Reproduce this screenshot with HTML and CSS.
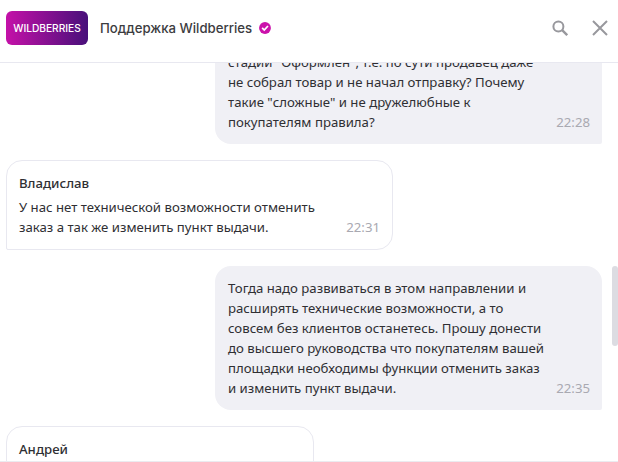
FILE: index.html
```html
<!DOCTYPE html>
<html lang="ru">
<head>
    <meta charset="UTF-8">
    <title>Поддержка Wildberries</title>
    <link rel="stylesheet" href="styles.css">
</head>
<body>
    <div class="chat">
        <header class="chat-header">
            <div class="logo">WILDBERRIES</div>
            <div class="chat-title">Поддержка Wildberries</div>
            <svg class="verified" width="12" height="12" viewBox="0 0 13 13">
                <circle cx="6.5" cy="6.5" r="6.4" fill="#cb11ab"/>
                <path d="M3.4 6.4l2.3 2.3 4-4.4" fill="none" stroke="#fff" stroke-width="1.9"/>
            </svg>
            <div class="header-actions">
                <svg width="16" height="16" viewBox="0 0 16 16">
                    <circle cx="6.4" cy="6.4" r="5" fill="none" stroke="#98989d" stroke-width="2"/>
                    <path d="M9.9 9.9l5.3 5.3" stroke="#98989d" stroke-width="2.4"/>
                </svg>
                <svg width="16" height="16" viewBox="0 0 16 16">
                    <path d="M1 1l14 14M15 1L1 15" stroke="#98989d" stroke-width="2"/>
                </svg>
            </div>
        </header>

        <div class="messages">
            <div class="message message-own message-first">
                <p>стадии "Оформлен", т.е. по сути продавец даже<br>не собрал товар и не начал отправку? Почему<br>такие "сложные" и не дружелюбные к<br>покупателям правила?</p>
                <span class="time">22:28</span>
            </div>
            <div class="message message-other">
                <div class="author">Владислав</div>
                <p>У нас нет технической возможности отменить<br>заказ а так же изменить пункт выдачи.</p>
                <span class="time">22:31</span>
            </div>
            <div class="message message-own">
                <p>Тогда надо развиваться в этом направлении и<br>расширять технические возможности, а то<br>совсем без клиентов останетесь. Прошу донести<br>до высшего руководства что покупателям вашей<br>площадки необходимы функции отменить заказ<br>и изменить пункт выдачи.</p>
                <span class="time">22:35</span>
            </div>
            <div class="message message-other message-last">
                <div class="author">Андрей</div>
            </div>
            <div class="scrollbar"></div>
        </div>
    </div>
</body>
</html>
```

FILE: styles.css
```css
* {
    box-sizing: border-box;
}
html, body {
    margin: 0;
    height: 100%;
}
body {
    font-family: "Noto Sans", sans-serif;
    font-size: 13.2px;
    line-height: 20px;
    color: #2f2f33;
    background-color: #fff;
    overflow: hidden;
}
.chat {
    display: flex;
    flex-direction: column;
    height: 462px;
    border-bottom: 1px solid #ebebf0;
}
.chat-header {
    display: flex;
    align-items: center;
    flex: none;
    height: 63px;
    padding: 0 10px 6px 6px;
    border-bottom: 1px solid #e8e8f0;
}
.logo {
    width: 82px;
    height: 34px;
    margin-right: 12px;
    border-radius: 6px;
    background: linear-gradient(90deg, #c411a8, #48107a);
    color: #fff;
    font-family: "Inter", sans-serif;
    font-size: 10.2px;
    font-weight: 500;
    line-height: 34px;
    text-align: center;
}
.chat-title {
    font-family: "Inter", sans-serif;
    font-size: 13.2px;
    font-weight: 500;
    color: #3c3c40;
}
.verified {
    margin-left: 7px;
}
.header-actions {
    display: flex;
    gap: 24px;
    margin-left: auto;
}
.messages {
    position: relative;
    flex: 1;
    min-height: 0;
    overflow: hidden;
    display: flex;
    flex-direction: column;
    gap: 16px;
    padding: 0 16px 0 6px;
}
.message {
    position: relative;
    flex: none;
    width: 387px;
    padding: 12px 12px;
    border-radius: 16px;
}
.message p {
    margin: 0;
}
.message-own {
    align-self: flex-end;
    padding: 12px 12px 12px 13px;
    background-color: #f0f0f5;
    border-radius: 16px 16px 2px 16px;
}
.message-first {
    margin-top: -29px;
    padding-top: 18px;
}
.message-other {
    align-self: flex-start;
    border: 1px solid #e8e8f0;
    border-bottom-left-radius: 2px;
}
.message-last {
    width: 308px;
    height: 80px;
}
.author {
    margin-bottom: 4px;
    font-weight: 500;
}
.time {
    position: absolute;
    right: 12px;
    bottom: 12px;
    color: #a9a9b1;
}
.scrollbar {
    position: absolute;
    top: 203px;
    right: 0;
    width: 6px;
    height: 80px;
    border-radius: 3px;
    background-color: #dcdce2;
}
```
